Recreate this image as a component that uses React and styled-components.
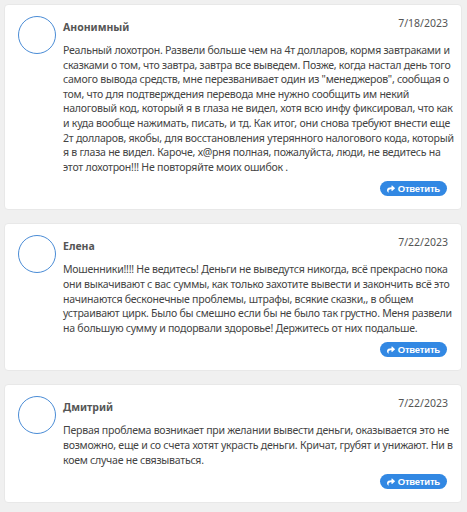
import styled, { createGlobalStyle } from "styled-components";
import { FaShare } from "react-icons/fa";

const GlobalStyle = createGlobalStyle`
    html, body {
        margin: 0;
        padding: 0;
        background: #f0f0f0;
    }
    * {
        box-sizing: border-box;
    }
`;

const Page = styled.div`
    padding: 4px 5px 0 4px;
    display: flex;
    flex-direction: column;
    gap: 13px;
    font-family: "Noto Sans", "Open Sans", sans-serif;
`;

const Card = styled.div`
    background: #fff;
    border: 1px solid #e8e8e8;
    border-radius: 4px;
    padding: 11px 8px 13px 13px;
    display: flex;
    gap: 7px;
`;

const Avatar = styled.div`
    flex: none;
    width: 38px;
    height: 38px;
    border-radius: 50%;
    border: 1.5px solid #4a8cd6;
    background: #fff;
`;

const Content = styled.div`
    flex: 1;
    min-width: 0;
    display: flex;
    flex-direction: column;
`;

const Header = styled.div`
    display: flex;
    justify-content: space-between;
    align-items: flex-start;
    padding-right: 5px;
`;

const Name = styled.div`
    margin-top: 4px;
    font-size: 10.5px;
    line-height: 14px;
    font-weight: 700;
    color: #555;
`;

const Date = styled.div`
    font-size: 10.5px;
    line-height: 14px;
    color: #555;
`;

const Text = styled.div`
    margin-top: 9px;
    font-size: 10.55px;
    letter-spacing: -0.25px;
    line-height: 14.6px;
    color: #444;
`;

const Line = styled.span`
    display: block;
    white-space: nowrap;
`;

const Footer = styled.div`
    display: flex;
    justify-content: flex-end;
    margin-top: 7px;
    padding-right: 6px;
`;

const ReplyButton = styled.button`
    display: flex;
    align-items: center;
    gap: 3px;
    height: 15px;
    padding: 0 7px;
    border: none;
    border-radius: 8px;
    background: #3288e3;
    color: #fff;
    font-family: "Liberation Sans", Arial, sans-serif;
    font-size: 9.5px;
    font-weight: 700;
    letter-spacing: -0.2px;
    cursor: pointer;
`;

const comments = [
    {
        name: "Анонимный",
        date: "7/18/2023",
        lines: [
            "Реальный лохотрон. Развели больше чем на 4т долларов, кормя завтраками и",
            "сказками о том, что завтра, завтра все выведем. Позже, когда настал день того",
            "самого вывода средств, мне перезванивает один из \"менеджеров\", сообщая о",
            "том, что для подтверждения перевода мне нужно сообщить им некий",
            "налоговый код, который я в глаза не видел, хотя всю инфу фиксировал, что как",
            "и куда вообще нажимать, писать, и тд. Как итог, они снова требуют внести еще",
            "2т долларов, якобы, для восстановления утерянного налогового кода, который",
            "я в глаза не видел. Кароче, х@рня полная, пожалуйста, люди, не ведитесь на",
            "этот лохотрон!!! Не повторяйте моих ошибок .",
        ],
    },
    {
        name: "Елена",
        date: "7/22/2023",
        lines: [
            "Мошенники!!!! Не ведитесь! Деньги не выведутся никогда, всё прекрасно пока",
            "они выкачивают с вас суммы, как только захотите вывести и закончить всё это",
            "начинаются бесконечные проблемы, штрафы, всякие сказки,, в общем",
            "устраивают цирк. Было бы смешно если бы не было так грустно. Меня развели",
            "на большую сумму и подорвали здоровье! Держитесь от них подальше.",
        ],
    },
    {
        name: "Дмитрий",
        date: "7/22/2023",
        lines: [
            "Первая проблема возникает при желании вывести деньги, оказывается это не",
            "возможно, еще и со счета хотят украсть деньги. Кричат, грубят и унижают. Ни в",
            "коем случае не связываться.",
        ],
    },
];

const Comment = ({ item }) => {
    return (
        <Card>
            <Avatar />
            <Content>
                <Header>
                    <Name>{item.name}</Name>
                    <Date>{item.date}</Date>
                </Header>
                <Text>
                    {item.lines.map((line, i) => (
                        <Line key={i}>{line}</Line>
                    ))}
                </Text>
                <Footer>
                    <ReplyButton>
                        <FaShare size={8} />
                        Ответить
                    </ReplyButton>
                </Footer>
            </Content>
        </Card>
    );
};

const App = () => {
    return (
        <>
            <GlobalStyle />
            <Page>
                {comments.map((item) => (
                    <Comment key={item.name} item={item} />
                ))}
            </Page>
        </>
    );
};

export default App;
